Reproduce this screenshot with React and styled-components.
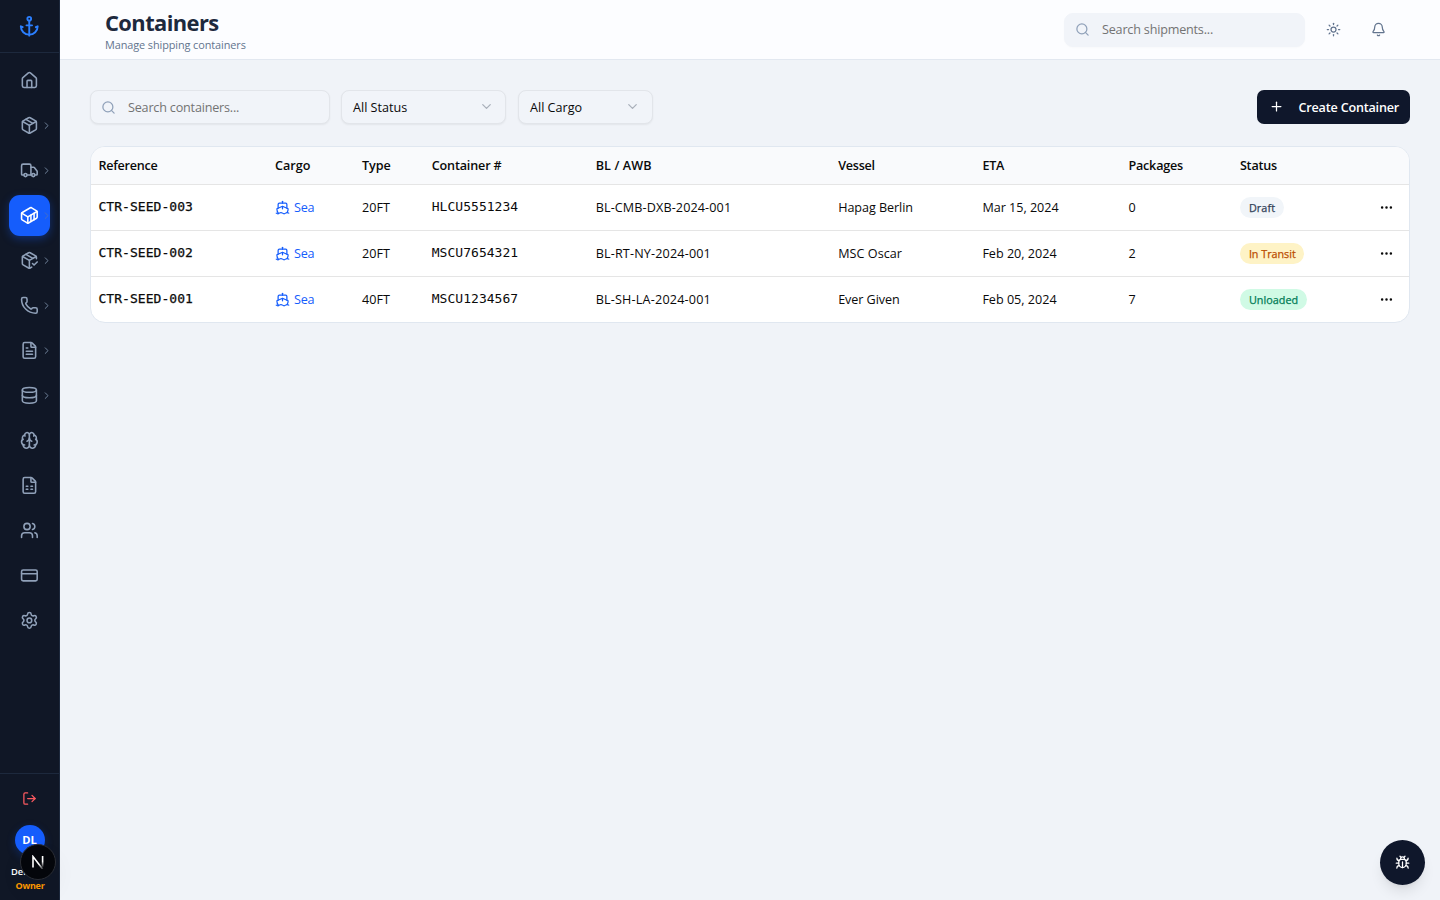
import React from "react";
import styled, { createGlobalStyle, css } from "styled-components";
import {
  Anchor, House, Package, Truck, Container, PackageCheck, Phone, FileText, Database, Brain,
  FileSpreadsheet, Users, CreditCard, Settings, LogOut, Search, Sun, Bell, Plus, ChevronDown,
  ChevronRight, Ship, Ellipsis, Bug,
} from "lucide-react";

const GlobalStyle = createGlobalStyle`
  *, *::before, *::after { box-sizing: border-box; }
  body {
    margin: 0;
    background: #f0f3f8;
    color: #0a0a0a;
    font-family: "Open Sans", "Noto Sans", sans-serif;
    font-size: 12.6px;
    line-height: 18.75px;
  }
  svg { display: block; flex: none; }
`;

const Shell = styled.div`
  display: flex;
  height: 900px;
  overflow: hidden;
`;

const Sidebar = styled.aside`
  display: flex;
  flex-direction: column;
  flex: none;
  width: 60px;
  background: #101726;
  border-right: 1px solid #1d293d;
`;

const Brand = styled.div`
  display: flex;
  align-items: center;
  justify-content: center;
  height: 53px;
  padding: 1px 1px 0 0;
  border-bottom: 1px solid #1d293d;
  color: #2b7fff;
`;

const Nav = styled.nav`
  display: flex;
  flex-direction: column;
  gap: 4px;
  flex: 1;
  padding: 7px 9px 0;
`;

const NavItem = styled.a`
  position: relative;
  display: flex;
  align-items: center;
  justify-content: center;
  width: 41px;
  height: 41px;
  border-radius: 11px;
  color: #90a1b9;
  ${(p) =>
    p.$active &&
    css`
      background: #155dfc;
      color: #fff;
      box-shadow: 0 3px 8px rgba(21, 93, 252, 0.35);
    `}
`;

const Expand = styled.span`
  position: absolute;
  right: -2px;
  top: 15px;
  color: ${(p) => (p.$active ? "#4b6fc0" : "#74869f")};
`;

const Account = styled.div`
  display: flex;
  flex-direction: column;
  align-items: center;
  height: 127px;
  padding-top: 17px;
  border-top: 1px solid #1d293d;
  color: #fb5a60;
`;

const Avatar = styled.div`
  display: flex;
  align-items: center;
  justify-content: center;
  width: 30px;
  height: 30px;
  margin-top: 19px;
  border-radius: 50%;
  background: #155dfc;
  box-shadow: 0 3px 9px rgba(21, 93, 252, 0.25);
  color: #fff;
  font-size: 11.2px;
  font-weight: 700;
`;

const UserName = styled.div`
  width: 37px;
  margin-top: 10px;
  overflow: hidden;
  color: #fff;
  font-size: 9.3px;
  font-weight: 600;
  line-height: 14px;
  white-space: nowrap;
`;

const Role = styled.div`
  padding-left: 1px;
  color: #fe9a00;
  font-size: 9px;
  font-weight: 700;
  line-height: 14px;
  letter-spacing: -0.25px;
`;

const DevBadge = styled.div`
  position: fixed;
  left: 20px;
  top: 844px;
  width: 36px;
  height: 36px;
  border-radius: 50%;
  background: #04060b;
  border: 1px solid #2b2e35;
  box-shadow: 0 12px 24px rgba(0, 0, 0, 0.06);
  display: flex;
  align-items: center;
  justify-content: center;
`;

const Page = styled.div`
  display: flex;
  flex-direction: column;
  flex: 1;
`;

const Header = styled.header`
  display: flex;
  align-items: center;
  justify-content: space-between;
  height: 60px;
  padding: 0 45px;
  background: #fcfdff;
  border-bottom: 1px solid #e2e8f0;
`;

const Heading = styled.div`
  padding-top: 2px;
`;

const Title = styled.h1`
  margin: 0;
  color: #1d293d;
  font-size: 21.9px;
  font-weight: 700;
  line-height: 28px;
  letter-spacing: -0.58px;
`;

const Subtitle = styled.p`
  margin: 0;
  color: #62748e;
  font-size: 10.9px;
  line-height: 15px;
  letter-spacing: -0.09px;
`;

const HeaderTools = styled.div`
  display: flex;
  align-items: center;
`;

const SearchField = styled.label`
  display: flex;
  align-items: center;
  gap: 12px;
  width: ${(p) => p.$width}px;
  height: 34px;
  padding: 0 10px;
  border: 1px solid ${(p) => (p.$bare ? "#f1f4f9" : "#e2e5ea")};
  border-radius: ${(p) => (p.$bare ? 9 : 8)}px;
  background: #f1f4f9;
  box-shadow: 0 1px 2px rgba(0, 0, 0, ${(p) => (p.$bare ? 0.02 : 0.06)});
  color: #90a1b9;
`;

const SearchInput = styled.input`
  flex: 1;
  min-width: 0;
  padding: 2px 0 0;
  border: 0;
  outline: 0;
  background: transparent;
  font: inherit;
  letter-spacing: -0.19px;
  &::placeholder { color: #737373; opacity: 1; }
`;

const IconButton = styled.button`
  display: flex;
  align-items: center;
  justify-content: center;
  width: 34px;
  height: 34px;
  margin-left: 11px;
  padding: 0;
  border: 0;
  background: transparent;
  color: #62748e;
`;

const Content = styled.main`
  padding: 30px;
`;

const Toolbar = styled.div`
  display: flex;
  gap: 12px;
`;

const Select = styled.button`
  display: flex;
  align-items: center;
  justify-content: space-between;
  width: ${(p) => p.$width}px;
  height: 34px;
  padding: 0 ${(p) => p.$end}px 0 11px;
  border: 1px solid #e2e5ea;
  border-radius: 8px;
  background: #f1f4f9;
  box-shadow: 0 1px 2px rgba(0, 0, 0, 0.06);
  color: #0a0a0a;
  font: inherit;
  svg { color: #a9b0ba; margin-bottom: 1px; }
  &:first-of-type { margin-left: -1px; }
`;

const ButtonText = styled.span`
  padding-top: 2px;
`;

const CreateButton = styled.button`
  display: flex;
  align-items: center;
  justify-content: space-between;
  width: 153px;
  height: 34px;
  margin-left: auto;
  padding: 0 11px 0 12px;
  border: 0;
  border-radius: 7px;
  background: #0f172b;
  color: #fff;
  font: inherit;
  font-weight: 600;
  letter-spacing: -0.2px;
  svg { margin-bottom: 1px; }
`;

const Table = styled.section`
  margin-top: 22px;
  border: 1px solid #e0e7f0;
  border-radius: 15px;
  background: #fff;
  overflow: hidden;
`;

const Row = styled.div`
  display: grid;
  grid-template-columns: 176.5px 87px 69.7px 164px 242.5px 144.2px 146px 111.5px 1fr 45px;
  align-items: center;
  height: 46px;
  border-bottom: 1px solid #e5e5e5;
  &:last-child { height: 45px; border-bottom: 0; }
`;

const HeadRow = styled(Row)`
  height: 38px;
  background: #f9fafc;
  font-weight: 600;
`;

const Cell = styled.div`
  padding: 2px 7.5px 0;
  white-space: nowrap;
  letter-spacing: ${(p) => p.$tracking || 0}px;
`;

const Code = styled(Cell)`
  padding-top: 0;
  font-family: "DejaVu Sans Mono", monospace;
  font-size: 13px;
  letter-spacing: 0.04px;
  -webkit-text-stroke: ${(p) => (p.$strong ? "0.25px" : "0")} #0a0a0a;
`;

const Mode = styled(Cell)`
  display: flex;
  align-items: center;
  gap: 4px;
  color: #155dfc;
  svg { margin-bottom: 2px; }
`;

const StatusCell = styled.div`
  display: flex;
  padding-left: 7.5px;
`;

const Badge = styled.span`
  display: flex;
  align-items: center;
  height: 21px;
  padding: 1px 8.5px 0 9px;
  border-radius: 11px;
  font-size: 10.8px;
  letter-spacing: ${(p) => p.$tracking}px;
  background: ${(p) => p.$tone.bg};
  color: ${(p) => p.$tone.fg};
  -webkit-text-stroke: 0.25px ${(p) => p.$tone.fg};
`;

const Actions = styled.div`
  display: flex;
  justify-content: center;
`;

const ReportButton = styled.button`
  position: fixed;
  left: 1380px;
  top: 840px;
  display: flex;
  align-items: center;
  justify-content: center;
  width: 45px;
  height: 45px;
  padding: 0;
  border: 0;
  border-radius: 50%;
  background: #0f172b;
  color: #fff;
  box-shadow: 0 9px 14px -3px rgba(0, 0, 0, 0.1), 0 4px 6px -4px rgba(0, 0, 0, 0.1);
`;

const navItems = [
  { icon: House },
  { icon: Package, more: true },
  { icon: Truck, more: true },
  { icon: Container, more: true, active: true },
  { icon: PackageCheck, more: true },
  { icon: Phone, more: true },
  { icon: FileText, more: true },
  { icon: Database, more: true },
  { icon: Brain },
  { icon: FileSpreadsheet },
  { icon: Users },
  { icon: CreditCard },
  { icon: Settings },
];

const columns = [
  ["Reference", -0.26], ["Cargo", 0], ["Type", -0.05], ["Container #", -0.16], ["BL / AWB", 0.1],
  ["Vessel", -0.25], ["ETA", -0.2], ["Packages", -0.19], ["Status", -0.2],
];

const tones = {
  draft: { bg: "#f1f5f9", fg: "#314158" },
  transit: { bg: "#fef3c6", fg: "#bb4d00" },
  unloaded: { bg: "#d0fae5", fg: "#007a55" },
};

const rows = [
  { ref: "CTR-SEED-003", type: "20FT", box: "HLCU5551234", bl: ["BL-CMB-DXB-2024-001", 0.12], vessel: ["Hapag Berlin", -0.06], eta: ["Mar 15, 2024", -0.02], packages: 0, status: ["Draft", 0.1, "draft"] },
  { ref: "CTR-SEED-002", type: "20FT", box: "MSCU7654321", bl: ["BL-RT-NY-2024-001", 0.16], vessel: ["MSC Oscar", 0.05], eta: ["Feb 20, 2024", 0], packages: 2, status: ["In Transit", -0.03, "transit"] },
  { ref: "CTR-SEED-001", type: "40FT", box: "MSCU1234567", bl: ["BL-SH-LA-2024-001", 0.19], vessel: ["Ever Given", -0.08], eta: ["Feb 05, 2024", 0], packages: 7, status: ["Unloaded", 0.05, "unloaded"] },
];

export default function App() {
  return (
    <>
      <GlobalStyle />
      <Shell>
        <Sidebar>
          <Brand><Anchor size={22.5} /></Brand>
          <Nav>
            {navItems.map(({ icon: Icon, more, active }, i) => (
              <NavItem key={i} $active={active}>
                <Icon size={18.75} />
                {more && <Expand $active={active}><ChevronRight size={11.25} /></Expand>}
              </NavItem>
            ))}
          </Nav>
          <Account>
            <LogOut size={15} />
            <Avatar>DL</Avatar>
            <UserName>Demo L</UserName>
            <Role>Owner</Role>
          </Account>
        </Sidebar>
        <Page>
          <Header>
            <Heading>
              <Title>Containers</Title>
              <Subtitle>Manage shipping containers</Subtitle>
            </Heading>
            <HeaderTools>
              <SearchField $width={241} $bare>
                <Search size={15} />
                <SearchInput placeholder="Search shipments..." />
              </SearchField>
              <IconButton><Sun size={15} /></IconButton>
              <IconButton><Bell size={15} /></IconButton>
            </HeaderTools>
          </Header>
          <Content>
            <Toolbar>
              <SearchField $width={240}>
                <Search size={15} />
                <SearchInput placeholder="Search containers..." />
              </SearchField>
              <Select $width={165} $end={11}><ButtonText>All Status</ButtonText><ChevronDown size={15} /></Select>
              <Select $width={135} $end={12}><ButtonText>All Cargo</ButtonText><ChevronDown size={15} /></Select>
              <CreateButton><Plus size={15} /><ButtonText>Create Container</ButtonText></CreateButton>
            </Toolbar>
            <Table>
              <HeadRow>
                {columns.map(([label, tracking]) => (
                  <Cell key={label} $tracking={tracking}>{label}</Cell>
                ))}
              </HeadRow>
              {rows.map((r) => (
                <Row key={r.ref}>
                  <Code $strong>{r.ref}</Code>
                  <Mode $tracking={-0.2}><Ship size={15} />Sea</Mode>
                  <Cell>{r.type}</Cell>
                  <Code>{r.box}</Code>
                  <Cell $tracking={r.bl[1]}>{r.bl[0]}</Cell>
                  <Cell $tracking={r.vessel[1]}>{r.vessel[0]}</Cell>
                  <Cell $tracking={r.eta[1]}>{r.eta[0]}</Cell>
                  <Cell>{r.packages}</Cell>
                  <StatusCell>
                    <Badge $tracking={r.status[1]} $tone={tones[r.status[2]]}>{r.status[0]}</Badge>
                  </StatusCell>
                  <Actions><Ellipsis size={15} /></Actions>
                </Row>
              ))}
            </Table>
          </Content>
        </Page>
        <DevBadge>
          <svg width="14" height="14" viewBox="0 0 14 14" fill="none">
            <defs>
              <linearGradient id="fade" x1="0" y1="0" x2="0" y2="1">
                <stop offset="0.5" stopColor="#fff" />
                <stop offset="1" stopColor="#fff" stopOpacity="0.1" />
              </linearGradient>
              <linearGradient id="tail" x1="6" y1="7" x2="12" y2="14" gradientUnits="userSpaceOnUse">
                <stop offset="0.3" stopColor="#fff" />
                <stop offset="1" stopColor="#fff" stopOpacity="0.2" />
              </linearGradient>
            </defs>
            <path d="M2 12.5V1.6L11.6 14" stroke="url(#tail)" strokeWidth="1.6" />
            <rect x="10.8" y="1" width="1.6" height="11" fill="url(#fade)" />
          </svg>
        </DevBadge>
        <ReportButton><Bug size={15} /></ReportButton>
      </Shell>
    </>
  );
}
